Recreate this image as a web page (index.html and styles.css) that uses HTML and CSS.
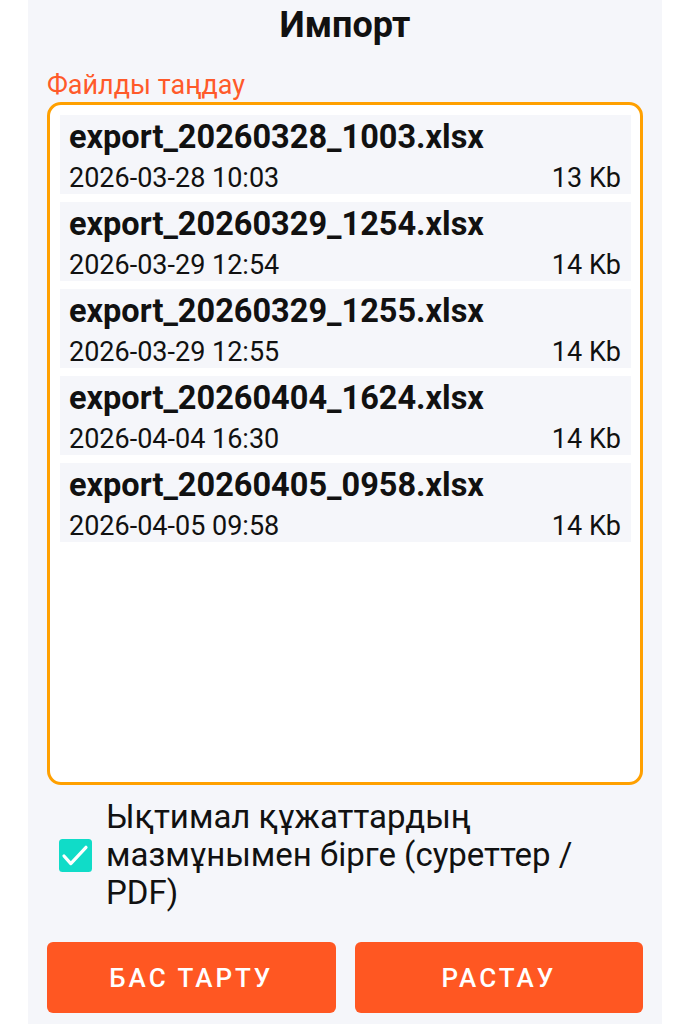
FILE: index.html
```html
<!DOCTYPE html>
<html lang="kk">
<head>
    <meta charset="UTF-8">
    <meta name="viewport" content="width=device-width, initial-scale=1.0">
    <title>Импорт</title>
    <link rel="stylesheet" href="styles.css">
</head>
<body>
    <div class="dialog">
        <h1 class="title">Импорт</h1>

        <div class="field-label">Файлды таңдау</div>
        <div class="file-box">
            <div class="file-item">
                <div class="file-name">export_20260328_1003.xlsx</div>
                <div class="file-meta"><span>2026-03-28 10:03</span><span>13 Kb</span></div>
            </div>
            <div class="file-item">
                <div class="file-name">export_20260329_1254.xlsx</div>
                <div class="file-meta"><span>2026-03-29 12:54</span><span>14 Kb</span></div>
            </div>
            <div class="file-item">
                <div class="file-name">export_20260329_1255.xlsx</div>
                <div class="file-meta"><span>2026-03-29 12:55</span><span>14 Kb</span></div>
            </div>
            <div class="file-item">
                <div class="file-name">export_20260404_1624.xlsx</div>
                <div class="file-meta"><span>2026-04-04 16:30</span><span>14 Kb</span></div>
            </div>
            <div class="file-item">
                <div class="file-name">export_20260405_0958.xlsx</div>
                <div class="file-meta"><span>2026-04-05 09:58</span><span>14 Kb</span></div>
            </div>
        </div>

        <label class="check-row">
            <svg class="checkbox" viewBox="0 0 33 33" width="33" height="33">
                <rect width="33" height="33" rx="3.5" fill="#10dcc8"/>
                <path d="M5 17l6.8 7.6L27 8.3" fill="none" stroke="#fff" stroke-width="3.2" stroke-linecap="round" stroke-linejoin="round"/>
            </svg>
            <span class="check-text">Ықтимал құжаттардың мазмұнымен бірге (суреттер / PDF)</span>
        </label>

        <div class="actions">
            <button class="btn">БАС ТАРТУ</button>
            <button class="btn">РАСТАУ</button>
        </div>
    </div>
</body>
</html>
```

FILE: styles.css
```css
/* Общие */
body {
    margin: 0;
    background: #fff;
    font-family: Roboto, "Noto Sans", sans-serif;
    color: #111;
}

/* Окно импорта */
.dialog {
    width: 634px;
    height: 1024px;
    margin-left: 28px;
    padding: 0 19px;
    box-sizing: border-box;
    background: #f5f6fa;
}

.title {
    margin: 0;
    font-size: 36px;
    font-weight: bold;
    line-height: 50px;
    text-align: center;
}

.field-label {
    margin-top: 19px;
    font-size: 27px;
    line-height: 32px;
    color: #ff5a2a;
}

/* Список файлов */
.file-box {
    height: 683px;
    margin-top: 1px;
    padding: 10px 9px 0 10px;
    box-sizing: border-box;
    border: 3px solid #ffa000;
    border-radius: 14px;
    background: #fff;
    display: flex;
    flex-direction: column;
    gap: 8px;
}

.file-item {
    height: 79px;
    padding: 3px 10px 0 9px;
    box-sizing: border-box;
    background: #f5f6fa;
}

.file-name {
    font-size: 32.5px;
    font-weight: bold;
    line-height: 38px;
}

.file-meta {
    display: flex;
    justify-content: space-between;
    margin-top: 5px;
    font-size: 27px;
    line-height: 34px;
}

/* Чекбокс */
.check-row {
    display: flex;
    align-items: center;
    gap: 14px;
    margin-top: 13px;
    padding-left: 12px;
}

.checkbox {
    flex: none;
}

.check-text {
    font-size: 33px;
    line-height: 38px;
}

/* Кнопки */
.actions {
    display: flex;
    gap: 19px;
    margin-top: 30px;
}

.btn {
    flex: 1;
    height: 71px;
    border: none;
    border-radius: 6px;
    background: #ff5722;
    color: #fff;
    font-family: Roboto, sans-serif;
    font-size: 26px;
    font-weight: 500;
    letter-spacing: 3px;
}
```
